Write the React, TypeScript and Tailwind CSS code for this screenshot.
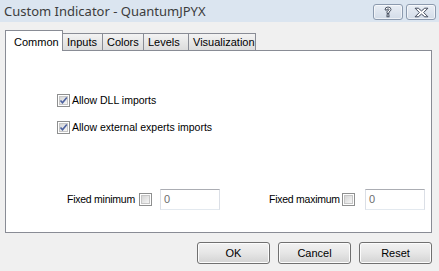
import React from "react";

const font = { fontFamily: '"Liberation Sans", Arial, sans-serif' };

function CheckBox({ checked }: { checked?: boolean }) {
  return (
    <div className="w-[13px] h-[13px] border border-[#8e8f8f] bg-white p-px shrink-0">
      <div className="w-full h-full bg-gradient-to-br from-[#d6d6d6] to-[#f6f6f6] border border-[#c6c6c6] relative">
        {checked && (
          <svg viewBox="0 0 9 9" className="absolute -left-px -top-px w-[9px] h-[9px]">
            <path d="M1.5 4.5 L3.5 6.8 L7.8 1.5" fill="none" stroke="#4c61a0" strokeWidth="1.6" />
          </svg>
        )}
      </div>
    </div>
  );
}

function TitleButton({ children }: { children: React.ReactNode }) {
  return (
    <div className="w-[30px] h-[16px] rounded-[3px] border border-[#8c9aae] bg-gradient-to-b from-[#e9eef5] to-[#d3dce8] flex items-center justify-center shadow-[inset_0_0_0_1px_rgba(255,255,255,0.6)]">
      {children}
    </div>
  );
}

function Btn({ label }: { label: string }) {
  return (
    <div className="w-[73px] h-[22px] rounded-[3px] border border-[#707070] bg-gradient-to-b from-[#f2f2f2] via-[#e6e6e6] to-[#d3d3d3] shadow-[inset_0_0_0_1px_#fcfcfc] flex items-center justify-center text-[11px] text-black">
      {label}
    </div>
  );
}

function Tab({ label, w, active }: { label: string; w: string; active?: boolean }) {
  if (active) {
    return (
      <div className={`${w} h-[21px] -mb-px relative z-10 bg-white border border-[#898c95] border-b-0 flex items-start pt-[3px] pl-[8px] text-[11px] text-black`}>
        {label}
      </div>
    );
  }
  return (
    <div className={`${w} h-[17px] bg-gradient-to-b from-[#f3f3f3] to-[#dcdcdc] border border-[#898c95] border-b-0 border-l-0 flex items-center pl-[4px] text-[11px] text-black`}>
      {label}
    </div>
  );
}

function NumBox() {
  return (
    <div className="w-[60px] h-[21px] border border-[#abadb3] border-l-[#dbdfe6] border-r-[#dbdfe6] border-b-[#e3e9ef] bg-white flex items-center pl-[3px] text-[#6d6d6d] text-[11px]">
      0
    </div>
  );
}

export default function App() {
  return (
    <div className="w-[439px] h-[271px] bg-[#f0f0f0] flex flex-col overflow-hidden" style={font}>
      <div className="h-[22px] bg-[#dbe5f0] flex items-center justify-between pl-[4px] pr-[3px]">
        <span className="text-[13px] text-[#3c3c3c] leading-none" style={{ fontFamily: '"Noto Sans", "Open Sans", sans-serif' }}>
          Custom Indicator - QuantumJPYX
        </span>
        <div className="flex gap-[3px] mt-[2px]">
          <TitleButton>
            <svg viewBox="0 0 10 12" className="w-[10px] h-[12px]">
              <path d="M2 4 Q2 1 5 1 Q8 1 8 3.5 Q8 5 6 6 L6 7.5 L4 7.5 L4 5.3 Q6 4.7 6 3.6 Q6 2.8 5 2.8 Q4 2.8 4 4 Z" fill="#fff" stroke="#3b4455" strokeWidth="0.9" />
              <rect x="4" y="8.8" width="2" height="2" fill="#fff" stroke="#3b4455" strokeWidth="0.9" />
            </svg>
          </TitleButton>
          <TitleButton>
            <svg viewBox="0 0 14 10" className="w-[15px] h-[11px]">
              <path d="M1 1 H4 L7 3.5 L10 1 H13 L9 5 L13 9 H10 L7 6.5 L4 9 H1 L5 5 Z" fill="#fff" stroke="#3b4455" strokeWidth="0.9" strokeLinejoin="round" />
            </svg>
          </TitleButton>
        </div>
      </div>

      <div className="flex flex-col pl-[5px] pr-[7px] pt-[8px]">
        <div className="flex items-end h-[20px]">
          <Tab label="Common" w="w-[58px]" active />
          <Tab label="Inputs" w="w-[40px]" />
          <Tab label="Colors" w="w-[41px]" />
          <Tab label="Levels" w="w-[45px]" />
          <Tab label="Visualization" w="w-[67px]" />
        </div>
        <div className="h-[183px] bg-white border border-[#898c95] flex flex-col text-[10.5px] text-black whitespace-nowrap">
          <div className="flex flex-col gap-[14px] pl-[51px] pt-[43px]">
            <div className="flex items-center gap-[2px] h-[13px]">
              <CheckBox checked />
              <span>Allow DLL imports</span>
            </div>
            <div className="flex items-center gap-[2px] h-[13px]">
              <CheckBox checked />
              <span>Allow external experts imports</span>
            </div>
          </div>
          <div className="flex items-center pt-[55px] pl-[61px] tracking-[-0.25px]">
            <span className="w-[72px] shrink-0">Fixed minimum</span>
            <CheckBox />
            <div className="ml-[8px]"><NumBox /></div>
            <span className="ml-[49px] w-[73px] shrink-0">Fixed maximum</span>
            <CheckBox />
            <div className="ml-[10px]"><NumBox /></div>
          </div>
        </div>
        <div className="flex justify-end gap-[8px] pt-[9px]">
          <Btn label="OK" />
          <Btn label="Cancel" />
          <Btn label="Reset" />
        </div>
      </div>
    </div>
  );
}
